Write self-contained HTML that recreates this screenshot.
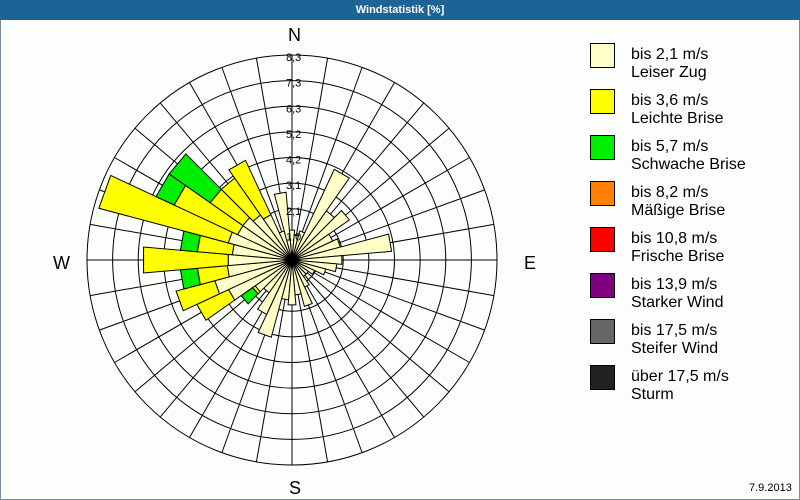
<!DOCTYPE html>
<html><head><meta charset="utf-8"><style>
body{margin:0;width:800px;height:500px;overflow:hidden;background:#fcfefc;font-family:"Liberation Sans",sans-serif;}
#t{position:absolute;left:0;top:0;width:800px;height:20px;background:#1c6396;color:#fff;font-size:11px;font-weight:bold;text-align:center;line-height:20px;}
#f{position:absolute;left:0;top:20px;width:798px;height:479px;border:1px solid #7a8a9a;border-top:none;}
svg{position:absolute;left:0;top:0}
.lg{position:absolute;left:590px;width:23px;height:23px;border:1px solid #000;}
.lt{position:absolute;left:631px;font-size:16px;line-height:18px;color:#000;}
</style></head><body>
<div id="t">Windstatistik [%]</div>
<div id="f"></div>
<svg id="s" width="800" height="500"></svg>
<div style="position:absolute;left:288px;top:25px;font-size:18px">N</div>
<div style="position:absolute;left:289px;top:478px;font-size:18px">S</div>
<div style="position:absolute;left:53px;top:253px;font-size:18px">W</div>
<div style="position:absolute;left:524px;top:253px;font-size:18px">E</div>
<div style="position:absolute;left:749px;top:482px;font-size:11px">7.9.2013</div>

<div class="lg" style="top:43px;background:#ffffc8"></div><div class="lt" style="top:46px">bis 2,1 m/s<br>Leiser Zug</div>
<div class="lg" style="top:89px;background:#ffff00"></div><div class="lt" style="top:92px">bis 3,6 m/s<br>Leichte Brise</div>
<div class="lg" style="top:135px;background:#00ee00"></div><div class="lt" style="top:138px">bis 5,7 m/s<br>Schwache Brise</div>
<div class="lg" style="top:181px;background:#ff8000"></div><div class="lt" style="top:184px">bis 8,2 m/s<br>Mäßige Brise</div>
<div class="lg" style="top:227px;background:#ff0000"></div><div class="lt" style="top:230px">bis 10,8 m/s<br>Frische Brise</div>
<div class="lg" style="top:273px;background:#800080"></div><div class="lt" style="top:276px">bis 13,9 m/s<br>Starker Wind</div>
<div class="lg" style="top:319px;background:#666666"></div><div class="lt" style="top:322px">bis 17,5 m/s<br>Steifer Wind</div>
<div class="lg" style="top:365px;background:#222222"></div><div class="lt" style="top:368px">über 17,5 m/s<br>Sturm</div>

<script>
var s=document.getElementById('s'),cx=292,cy=260,R=205,h='';
function p(a,r){var t=(a-90)*Math.PI/180;return [cx+r*Math.cos(t),cy+r*Math.sin(t)];}
for(var k=1;k<=8;k++)h+='<circle cx="'+cx+'" cy="'+cy+'" r="'+(R*k/8)+'" fill="none" stroke="#000" stroke-width="1"/>';
for(var a=0;a<360;a+=10){var q=p(a,R);h+='<line x1="'+cx+'" y1="'+cy+'" x2="'+q[0]+'" y2="'+q[1]+'" stroke="#000" stroke-width="1"/>';}
var B={0:[30],10:[25],20:[30],30:[100],40:[60],50:[70],60:[45],70:[50],80:[100],90:[50],100:[45],110:[35],120:[25],130:[20],140:[20],150:[30],160:[48],170:[35],180:[45],190:[40],200:[80],210:[60],220:[40],230:[45,48,62],240:[70,105],250:[80,120],260:[65,95,112],270:[64,149],280:[60,95,112],290:[66,200],300:[60,130,150],310:[60,100,150],320:[55,100],330:[50,110],340:[30],350:[68]};
var C=['#ffffc8','#ffff00','#00ee00'];
for(var d in B){var v=B[d],r0=0;d=+d;for(var i=0;i<v.length;i++){var a1=p(d-5,r0),a2=p(d-5,v[i]),a3=p(d+5,v[i]),a4=p(d+5,r0);
h+='<polygon points="'+[a1,a2,a3,a4].map(function(z){return z.join(',')}).join(' ')+'" fill="'+C[i]+'" stroke="#000" stroke-width="1"/>';r0=v[i];}}
h+='<circle cx="'+cx+'" cy="'+cy+'" r="5" fill="#000"/>';
var L=['1,0','2,1','3,1','4,2','5,2','6,3','7,3','8,3'];
for(var k=0;k<8;k++)h+='<text x="'+(cx-6)+'" y="'+(cy-R*(k+1)/8+6)+'" font-size="11" font-family="Liberation Sans,sans-serif">'+L[k]+'</text>';
s.innerHTML=h;
</script>
</body></html>
